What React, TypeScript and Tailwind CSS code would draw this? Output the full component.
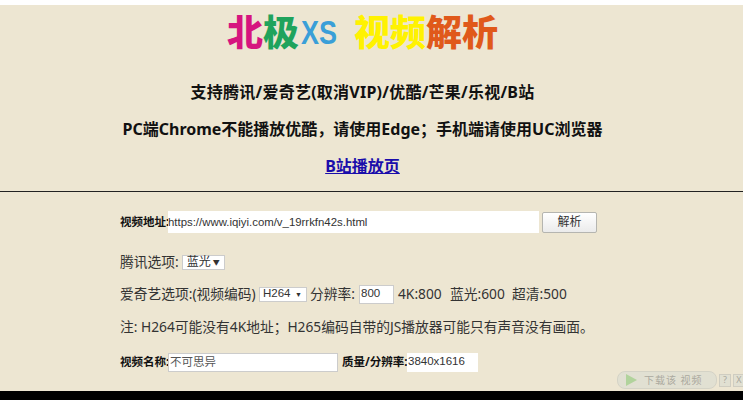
const cjk = "font-['Noto_Sans','Noto_Sans_CJK_SC',sans-serif]";

export default function App() {
  return (
    <div className={`relative flex h-[400px] w-[743px] flex-col overflow-hidden bg-white ${cjk}`}>
      <div className="h-[5px] bg-white" />
      <main className="flex-1 bg-[#ede6d2] text-[#111]">
        {/* header */}
        <div className="flex h-[187px] flex-col items-center border-b border-b-[#222] pr-[18px]">
          <div className="mt-[6px] flex h-[44px] items-center text-[36px] font-black leading-none">
            <span className="text-[#d6157f]">北</span>
            <span className="text-[#1fa35c]">极</span>
            <span className="ml-[2px] inline-block scale-y-[1.25] font-['Liberation_Sans',sans-serif] text-[27px] text-[#3a9fd8]">XS</span>
            <span className="ml-[17px] text-[#fff200]">视频</span>
            <span className="text-[#e0591a]">解析</span>
          </div>
          <p className="mt-[25px] text-[16px] font-bold leading-[24px] tracking-[0.25px]">支持腾讯/爱奇艺(取消VIP)/优酷/芒果/乐视/B站</p>
          <p className="mt-[13px] text-[16px] font-bold leading-[24px]">PC端Chrome不能播放优酷，请使用Edge；手机端请使用UC浏览器</p>
          <a className="mt-[13px] text-[16px] font-bold leading-[24px] text-[#1a0dab] underline" href="#">B站播放页</a>
        </div>

        {/* form */}
        <div className="flex flex-col pl-[120px]">
          <div className="mt-[19px] flex h-[22px] items-center">
            <span className="w-[48px] whitespace-nowrap text-[11.5px] font-bold">视频地址:</span>
            <span className="flex h-[22px] w-[371px] items-center bg-white pt-[1px] font-['Liberation_Sans',sans-serif] text-[11.4px] text-[#333]">https://www.iqiyi.com/v_19rrkfn42s.html</span>
            <button className="ml-[3px] h-[21px] w-[55px] rounded-[2px] border border-[#b5b5b0] bg-gradient-to-b from-white to-[#ebebeb] text-[12px] text-[#333]">解析</button>
          </div>

          <div className="mt-[17px] flex h-[24px] items-center text-[13.75px] text-[#333]">
            <span>腾讯选项:</span>
            <span className="ml-[3px] flex h-[15px] w-[43px] items-center justify-between border border-[#ccc] bg-white pl-[4px] pr-[4px] text-[12px] leading-none">
              蓝光<span className="text-[7px]">▼</span>
            </span>
          </div>

          <div className="mt-[8px] flex h-[24px] items-center whitespace-nowrap text-[13.75px] text-[#333]">
            <span className="w-[134px]">爱奇艺选项:(视频编码)</span>
            <span className="ml-[5px] flex h-[15px] w-[48px] items-center justify-between border border-[#ccc] bg-white pl-[3px] pr-[4px] font-['Liberation_Sans',sans-serif] text-[11.5px] leading-none">
              H264<span className="text-[7px]">▼</span>
            </span>
            <span className="ml-[3px] w-[46px]">分辨率:</span>
            <span className="ml-[3px] flex h-[19px] w-[35px] items-center border border-[#ccc] bg-white pl-[1px] font-['Liberation_Sans',sans-serif] text-[11.5px]">800</span>
            <span className="ml-[4px] w-[43px]">4K:800</span>
            <span className="ml-[9px] w-[54px]">蓝光:600</span>
            <span className="ml-[8px]">超清:500</span>
          </div>

          <p className="mt-[9px] h-[24px] text-[13.75px] leading-[24px] text-[#333]">注: H264可能没有4K地址；H265编码自带的JS播放器可能只有声音没有画面。</p>

          <div className="mt-[13px] flex h-[20px] items-center">
            <span className="w-[48px] whitespace-nowrap text-[11.5px] font-bold">视频名称:</span>
            <span className="flex h-[19px] w-[170px] items-center border border-[#ccc] bg-white pl-[1px] text-[11.5px] text-[#555]">不可思异</span>
            <span className="ml-[4px] w-[65px] whitespace-nowrap text-[11.5px] font-bold">质量/分辨率:</span>
            <span className="flex h-[19px] w-[71px] items-center bg-white pl-[1px] font-['Liberation_Sans',sans-serif] text-[11.5px] text-[#333]">3840x1616</span>
          </div>
        </div>
      </main>
      <div className="h-[9px] bg-black" />

      {/* download overlay */}
      <div className="absolute left-[617px] top-[371px] flex items-center gap-[2px] opacity-80">
        <div className="flex h-[18px] w-[100px] items-center rounded-[8px] border border-[#cfcfc4] bg-[#dfdfd3] pl-[8px]">
          <svg width="11" height="12" viewBox="0 0 11 12">
            <path d="M0 0L11 6L0 12Z" fill="#a3cf8f" />
          </svg>
          <span className="ml-[7px] text-[10px] tracking-[1px] text-[#9b9b92]">下载该 视频</span>
        </div>
        <span className="flex h-[13px] w-[12px] items-center justify-center border border-[#c8c8bd] bg-[#dfdfd3] text-[9px] text-[#99998f]">?</span>
        <span className="flex h-[13px] w-[12px] items-center justify-center border border-[#c8c8bd] bg-[#dfdfd3] text-[9px] text-[#99998f]">X</span>
      </div>
    </div>
  );
}
